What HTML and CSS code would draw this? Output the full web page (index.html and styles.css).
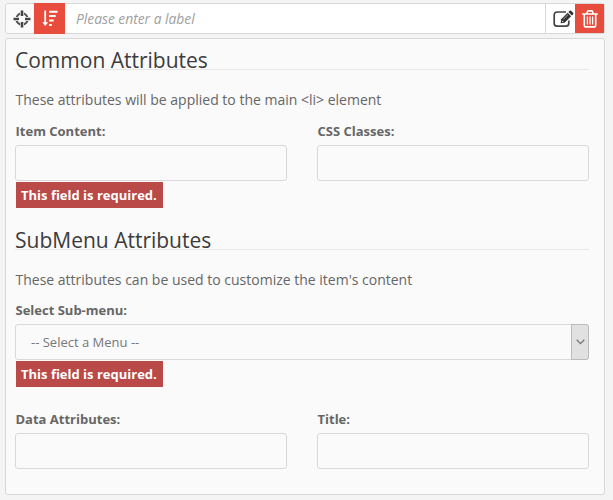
FILE: index.html
```html
<!DOCTYPE html>
<html lang="en">
<head>
<meta charset="utf-8">
<title>Menu item</title>
<link rel="stylesheet" href="styles.css">
</head>
<body>
<div class="bar">
  <span class="tool move"><svg width="18" height="18" viewBox="0 0 18 18"><circle cx="9" cy="9" r="5.7" fill="none" stroke="#555" stroke-width="1.9"/><path d="M7 0h4v6H7zM7 12h4v6H7zM0 7h6v4H0zM12 7h6v4h-6z" fill="#fafafa"/><path d="M7.7.5h2.6v5.5H7.7zM7.7 12h2.6v5.5H7.7zM.5 7.7H6v2.6H.5zM12 7.7h5.5v2.6H12z" fill="#444"/></svg></span>
  <span class="tool sort"><svg width="16" height="17" viewBox="0 0 16 17" fill="none" stroke="#fff"><path d="M3.2.5v14" stroke-width="1.8"/><path d="M.2 12.3h6L3.2 16z" fill="#fff" stroke="none"/><path d="M7 1.7h8.6M7 6.1h6.7M7 10.5h4.7M7 14.9h2.8" stroke-width="2"/></svg></span>
  <input class="label-input" type="text" placeholder="Please enter a label">
  <span class="tool edit"><svg width="21" height="18" viewBox="0 0 21 18" fill="none"><path d="M13 2H4.2Q1.2 2 1.2 5v8.2q0 3 3 3h8.6q3 0 3-3v-2.6" stroke="#444" stroke-width="1.7"/><path d="M7.7 13.3l.4-4L14.6 2.8l3.5 3.5-6.5 6.5z" fill="#333"/><path d="M15.4 2l1.2-1.2q.8-.7 1.6 0l1.9 1.9q.7.8 0 1.6L18.9 5.5z" fill="#333"/><path d="M10.4 9.2l4.6-4.6" stroke="#bbb" stroke-width=".8"/><path d="M9 10.8l1.3 1.3" stroke="#fff"/></svg></span>
  <span class="tool trash"><svg width="16" height="18" viewBox="0 0 16 18" fill="none" stroke="#fff" stroke-width="1.6"><path d="M.2 4h15.6M4.7 4l.8-2.4q.2-.7 1-.7h3q.8 0 1 .7l.8 2.4M2.3 4v10.9q0 2 1.7 2h8q1.7 0 1.7-2V4"/><path d="M5.4 6.4v8M8 6.4v8M10.6 6.4v8" stroke-width="1.3"/></svg></span>
</div>
<div class="panel">
  <section class="group common">
    <h2>Common Attributes</h2>
    <p>These attributes will be applied to the main &lt;li&gt; element</p>
    <div class="row">
      <div class="field"><label for="content">Item Content:</label><input id="content" type="text"><span class="error">This field is required.</span></div>
      <div class="field"><label for="classes">CSS Classes:</label><input id="classes" type="text"></div>
    </div>
  </section>
  <section class="group">
    <h2>SubMenu Attributes</h2>
    <p>These attributes can be used to customize the item's content</p>
    <div class="field wide"><label>Select Sub-menu:</label>
      <div class="select"><span>-- Select a Menu --</span><i><svg width="9" height="6" viewBox="0 0 9 6"><path d="M.7.8l3.8 3.8L8.3.8" fill="none" stroke="#777" stroke-width="1.3"/></svg></i></div>
      <span class="error">This field is required.</span></div>
    <div class="row">
      <div class="field"><label for="data">Data Attributes:</label><input id="data" type="text"></div>
      <div class="field"><label for="title">Title:</label><input id="title" type="text"></div>
    </div>
  </section>
</div>
</body>
</html>
```
FILE: styles.css
```css
* { box-sizing: border-box; }
body {
  margin: 0;
  padding: 3px 8px 0 5px;
  background: #f4f4f4;
  color: #666;
  font-family: "Open Sans", sans-serif;
  overflow: hidden;
}
.bar {
  display: flex;
  height: 31px;
  border: 1px solid #d8d8d8;
  border-radius: 3px;
  background: #fff;
}
.tool {
  display: flex;
  flex: none;
  align-items: center;
  justify-content: center;
}
.move { width: 28px; padding-left: 3px; background: #fafafa; border-radius: 3px 0 0 3px; }
.sort { width: 31px; margin: -1px 0; background: #e74c3c; }
.label-input {
  flex: 1;
  min-width: 0;
  border: 0;
  padding: 0 0 0 11px;
  background: #fff;
  font: italic 13.8px "Open Sans", sans-serif;
}
.label-input::placeholder { color: #a0a0a0; opacity: 1; }
.edit { width: 30px; padding-left: 6px; border-left: 1px solid #d8d8d8; }
.trash { width: 29px; padding-left: 1px; background: #e74c3c; }
.panel {
  height: 457px;
  margin-top: 4px;
  padding: 9px 15px 0 9px;
  border: 1px solid #d8d8d8;
  border-radius: 3px;
  background: #fafafa;
}
.group { height: 180px; }
h2 {
  height: 22px;
  margin: 0;
  border-bottom: 1px solid #e8e8e8;
  color: #3c3c3c;
  font-size: 21px;
  font-weight: 400;
  line-height: 24px;
}
p {
  margin: 19px 0 10px;
  padding-left: .5px;
  font-size: 14px;
  line-height: 22px;
}
.row { display: flex; gap: 30px; }
.field { width: 272px; }
.wide { width: 100%; height: 109px; }
label {
  display: block;
  height: 23px;
  padding-left: .5px;
  font-size: 13px;
  font-weight: 700;
  line-height: 18px;
}
.common label { height: 24px; line-height: 20px; }
.field input, .select {
  display: block;
  width: 100%;
  height: 36px;
  border: 1px solid #d8d8d8;
  border-radius: 3px;
  background: #fafafa;
}
.select {
  display: flex;
  align-items: center;
  justify-content: space-between;
  padding-left: 15px;
  color: #777;
  font-size: 13px;
}
.select i {
  display: flex;
  align-items: center;
  justify-content: center;
  width: 18px;
  height: 36px;
  margin-right: -1px;
  border: 1px solid #bbb;
  border-radius: 0 3px 3px 0;
  background: #e1e1e1;
}
.error {
  display: block;
  width: 147px;
  height: 26px;
  margin: 1px 0 0 1px;
  padding-left: 5px;
  background: #b94a48;
  color: #fff;
  font-size: 13px;
  font-weight: 700;
  line-height: 26px;
}
```
